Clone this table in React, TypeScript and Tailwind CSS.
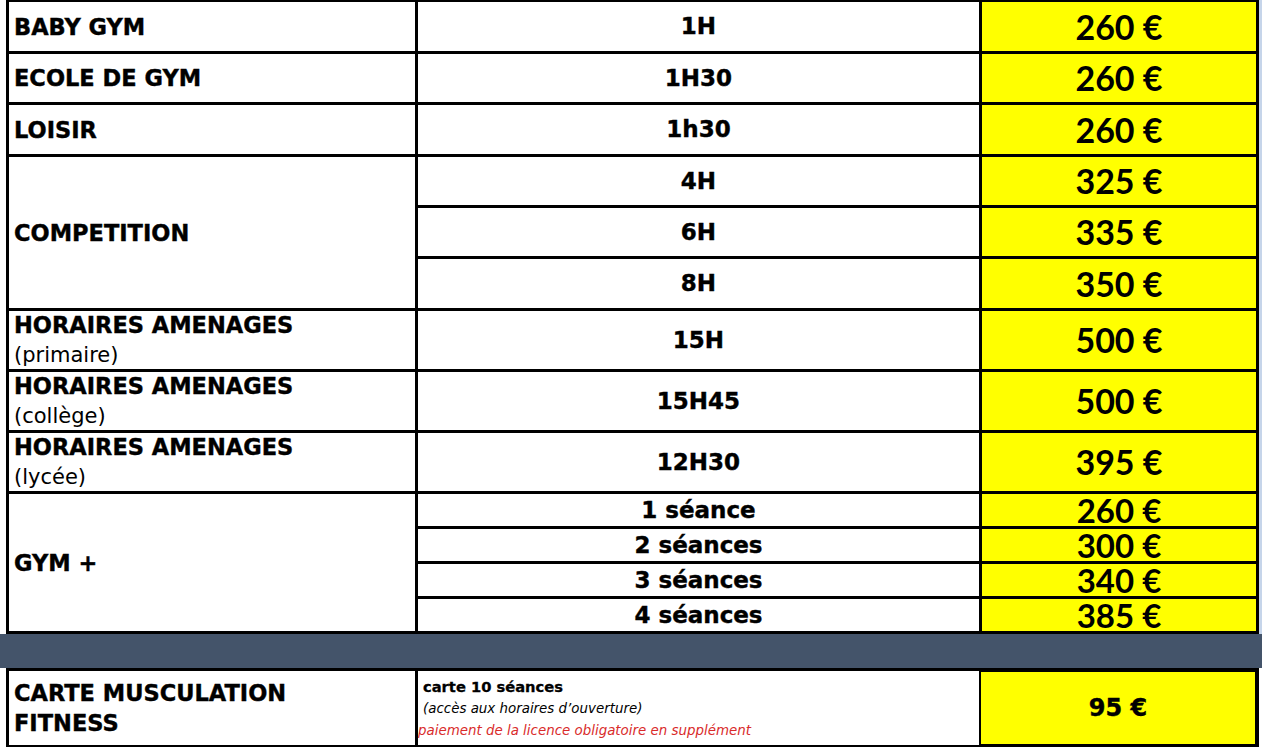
import React from "react";

const labelFont = { fontFamily: '"DejaVu Sans", Verdana, sans-serif' };
const priceFont = { fontFamily: 'Lato, "Liberation Sans", sans-serif' };

function Label({ children, span }: { children: React.ReactNode; span?: string }) {
  return (
    <div
      className={`bg-white flex items-center pl-[5px] text-[22.5px] font-bold text-black leading-[30px] [-webkit-text-stroke:0.4px_#000] ${span ?? ""}`}
      style={labelFont}
    >
      {children}
    </div>
  );
}

function Dur({ children }: { children: React.ReactNode }) {
  return (
    <div
      className="bg-white flex items-center justify-center text-[23px] font-bold text-black leading-none [-webkit-text-stroke:0.4px_#000]"
      style={labelFont}
    >
      {children}
    </div>
  );
}

function Price({ children, small }: { children: React.ReactNode; small?: boolean }) {
  return (
    <div
      className={
        small
          ? "bg-[#ffff00] flex items-center justify-center text-[33px] font-bold text-black leading-[28px] overflow-visible"
          : "bg-[#ffff00] flex items-center justify-center text-[34px] font-bold text-black leading-none overflow-visible"
      }
      style={priceFont}
    >
      {children}
    </div>
  );
}

function Horaires({ sub }: { sub: string }) {
  return (
    <div className="bg-white flex flex-col justify-center pl-[5px] text-black leading-[30px]" style={labelFont}>
      <div className="text-[22.5px] font-bold [-webkit-text-stroke:0.4px_#000]">HORAIRES AMENAGES</div>
      <div className="text-[21px] font-normal">{sub}</div>
    </div>
  );
}

export default function App() {
  return (
    <div className="w-[1262px] h-[747px] bg-white overflow-hidden relative">
      <div className="flex w-[1262px] bg-[#c6d5ea]">
        <div className="w-[6px] bg-white" />
        <div className="mt-[-1px] w-[1253px] bg-black p-[3px] gap-[3px] grid grid-cols-[406px_561px_274px] grid-rows-[49px_48px_49px_48px_48px_49px_58px_58px_58px_32px_32px_32px_32px]">
          <Label>BABY GYM</Label>
          <Dur>1H</Dur>
          <Price>260 €</Price>

          <Label>ECOLE DE GYM</Label>
          <Dur>1H30</Dur>
          <Price>260 €</Price>

          <Label>LOISIR</Label>
          <Dur>1h30</Dur>
          <Price>260 €</Price>

          <Label span="row-span-3">COMPETITION</Label>
          <Dur>4H</Dur>
          <Price>325 €</Price>
          <Dur>6H</Dur>
          <Price>335 €</Price>
          <Dur>8H</Dur>
          <Price>350 €</Price>

          <Horaires sub="(primaire)" />
          <Dur>15H</Dur>
          <Price>500 €</Price>

          <Horaires sub="(collège)" />
          <Dur>15H45</Dur>
          <Price>500 €</Price>

          <Horaires sub="(lycée)" />
          <Dur>12H30</Dur>
          <Price>395 €</Price>

          <Label span="row-span-4">GYM +</Label>
          <Dur>1 séance</Dur>
          <Price small>260 €</Price>
          <Dur>2 séances</Dur>
          <Price small>300 €</Price>
          <Dur>3 séances</Dur>
          <Price small>340 €</Price>
          <Dur>4 séances</Dur>
          <Price small>385 €</Price>
        </div>
      </div>

      <div className="h-[34px] w-[1262px] bg-[#44546a]" />

      <div className="flex w-[1262px]">
        <div className="w-[6px] bg-white" />
        <div className="w-[1253px] h-[80px] bg-black p-[3px] gap-[3px] grid grid-cols-[406px_561px_274px] grid-rows-[74px]">
          <div
            className="bg-white flex flex-col justify-center pl-[5px] text-[22.5px] font-bold text-black leading-[30px] [-webkit-text-stroke:0.4px_#000]"
            style={labelFont}
          >
            <div>CARTE MUSCULATION</div>
            <div>FITNESS</div>
          </div>
          <div className="bg-white flex flex-col pt-[5px] text-black" style={labelFont}>
            <div className="pl-[5px] text-[14.7px] font-bold leading-[22px] [-webkit-text-stroke:0.3px_#000]">carte 10 séances</div>
            <div className="pl-[5px] text-[13.4px] italic leading-[22px]">(accès aux horaires d’ouverture)</div>
            <div className="text-[13.4px] italic leading-[22px] text-[#d92b2b]">paiement de la licence obligatoire en supplément</div>
          </div>
          <div
            className="bg-[#ffff00] flex items-center justify-center text-[24px] font-bold text-black leading-none shadow-[inset_0_0_0_1px_#000] ml-[-2px] [-webkit-text-stroke:0.4px_#000]"
            style={labelFont}
          >
            95 €
          </div>
        </div>
        <div className="flex-1 bg-white" />
      </div>
    </div>
  );
}
